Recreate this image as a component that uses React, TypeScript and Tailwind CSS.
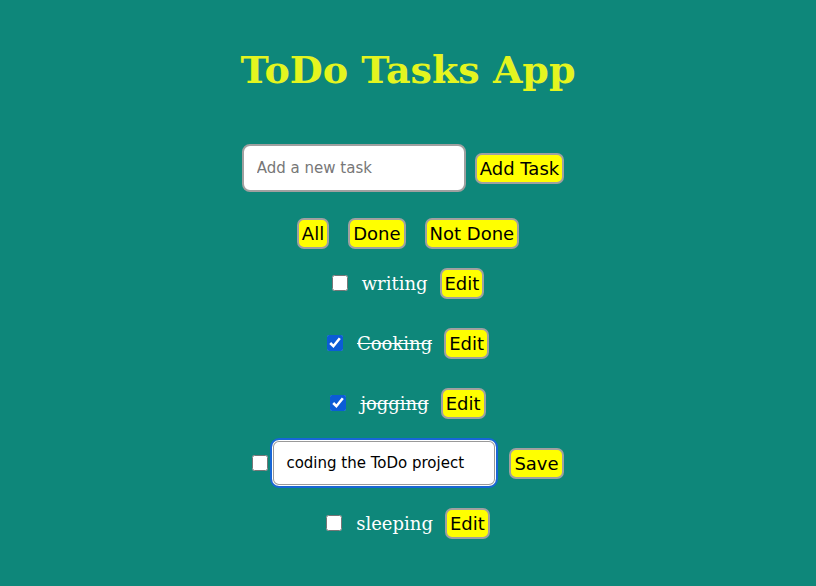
import React from 'react';

interface Task {
  id: number;
  text: string;
  done: boolean;
  editing?: boolean;
}

const tasks: Task[] = [
  { id: 1, text: 'writing', done: false },
  { id: 2, text: 'Cooking', done: true },
  { id: 3, text: 'jogging', done: true },
  { id: 4, text: 'coding the ToDo project', done: false, editing: true },
  { id: 5, text: 'sleeping', done: false },
];

const btn =
  'bg-[#ffff00] text-black border-2 border-[#a0a0a0] rounded-[7px] px-[3px] py-[1px] leading-[25px] text-[18px] font-["DejaVu_Sans",sans-serif]';

const App: React.FC = () => {
  return (
    <div className="min-h-[586px] w-full bg-[#0e877a] flex flex-col items-center pt-[43px]">
      <h1 className='text-[#e4f51f] font-bold text-[38px] leading-[54px] font-["DejaVu_Serif",serif]'>ToDo Tasks App</h1>

      <div className="mt-[47px] mr-[10px] flex items-center gap-[9px]">
        <input
          placeholder="Add a new task"
          className='w-[224px] h-[48px] bg-white border-2 border-[#a0a0a0] rounded-[8px] px-[13px] text-[15px] font-["DejaVu_Sans",sans-serif] placeholder:text-[#777] outline-none'
        />
        <button className={btn}>Add Task</button>
      </div>

      <div className="mt-[26px] flex items-center gap-[19px]">
        <button className={btn}>All</button>
        <button className={btn}>Done</button>
        <button className={btn}>Not Done</button>
      </div>

      <ul className="mt-[4px] flex flex-col items-center">
        {tasks.map(t => (
          <li key={t.id} className="h-[60px] flex items-center">
            <input
              type="checkbox"
              defaultChecked={t.done}
              className={`w-[16px] h-[16px] accent-[#0b5cd6] ${t.editing ? 'mr-[2px]' : 'mr-[4px]'}`}
            />
            {t.editing ? (
              <input
                defaultValue={t.text}
                className='w-[228px] h-[50px] bg-white border-2 border-[#1766d6] rounded-[9px] px-[14px] text-[15px] font-["DejaVu_Sans",sans-serif] text-black outline-none shadow-[inset_0_0_0_1px_#fff,inset_0_0_0_2px_#999]'
              />
            ) : (
              <span
                className={`ml-[10px] text-white text-[18px] font-["DejaVu_Serif",serif] ${t.done ? 'line-through' : ''}`}
              >
                {t.text}
              </span>
            )}
            <button className={`${btn} ${t.editing ? 'ml-[11px]' : 'ml-[12px]'}`}>{t.editing ? 'Save' : 'Edit'}</button>
          </li>
        ))}
      </ul>
    </div>
  );
};

export default App;
